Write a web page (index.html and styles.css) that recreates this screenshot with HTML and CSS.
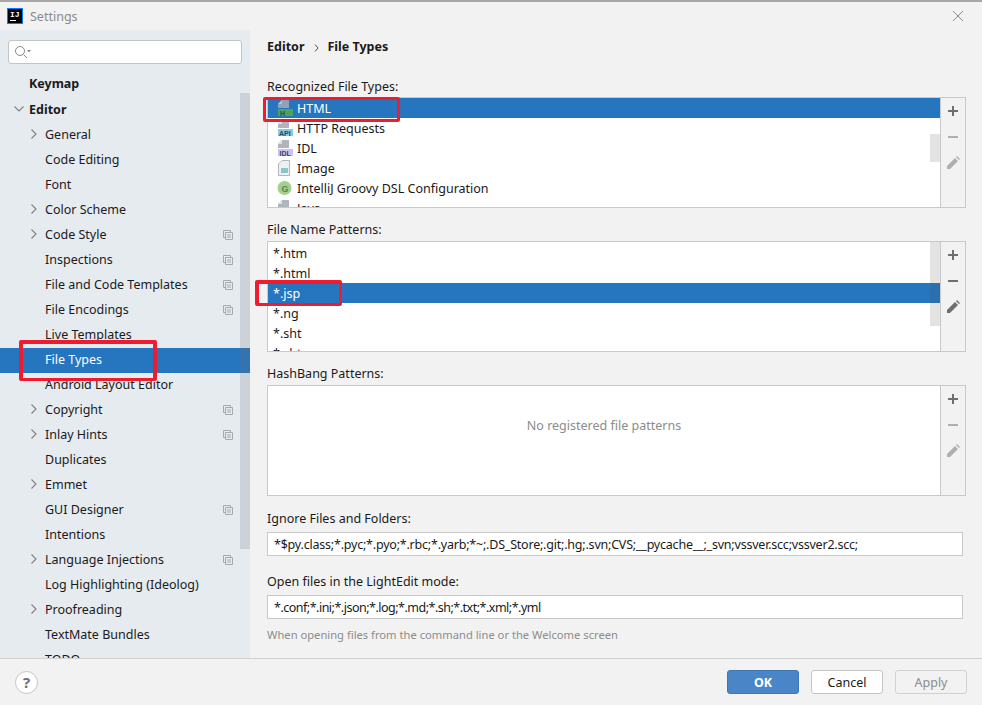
FILE: index.html
```html
<!DOCTYPE html>
<html lang="en">
<head>
<meta charset="utf-8">
<title>Settings</title>
<link rel="stylesheet" href="styles.css">
</head>
<body>
<div class="dialog">
  <header class="titlebar">
    <svg class="app-logo" width="16" height="16" viewBox="0 0 16 16"><rect x="0.5" y="0.5" width="15" height="15" fill="#000" stroke="#087cfa"/><text x="3" y="9" class="logo-text">IJ</text><rect x="3" y="12" width="6" height="1" fill="#fff"/></svg>
    <span class="title">Settings</span>
    <svg class="close" width="10" height="10" viewBox="0 0 10 10"><path d="M0 0l10 10M10 0L0 10" stroke="#8c8c8c" fill="none"/></svg>
  </header>
  <div class="body">
    <aside class="sidebar">
      <div class="search">
        <svg width="20" height="14" viewBox="0 0 20 14"><circle cx="6" cy="6" r="4.5" fill="none" stroke="#8a8a8a"/><path d="M9.5 9.5L13 13" stroke="#8a8a8a" fill="none"/><path d="M13 5h4l-2 2.5z" fill="#8a8a8a"/></svg>
      </div>
      <div class="tree">
        <div class="row bold l1 keymap">Keymap</div>
        <div class="row bold l1"><svg class="arrow" width="10" height="10" viewBox="0 0 10 10"><path d="M.5 2.5L5 7l4.5-4.5" /></svg>Editor</div>
        <div class="row l2"><svg class="arrow" width="10" height="10" viewBox="0 0 10 10"><path d="M2.5.5L7 5 2.5 9.5" /></svg>General</div>
        <div class="row l2">Code Editing</div>
        <div class="row l2">Font</div>
        <div class="row l2"><svg class="arrow" width="10" height="10" viewBox="0 0 10 10"><path d="M2.5.5L7 5 2.5 9.5" /></svg>Color Scheme</div>
        <div class="row l2"><svg class="arrow" width="10" height="10" viewBox="0 0 10 10"><path d="M2.5.5L7 5 2.5 9.5" /></svg>Code Style<svg class="copy" width="10" height="10" viewBox="0 0 10 10"><path d="M.5.5h7v2M.5.5v7h2M2.5 2.5h7v7h-7zM4 5h4M4 7h4"/></svg></div>
        <div class="row l2">Inspections<svg class="copy" width="10" height="10" viewBox="0 0 10 10"><path d="M.5.5h7v2M.5.5v7h2M2.5 2.5h7v7h-7zM4 5h4M4 7h4"/></svg></div>
        <div class="row l2">File and Code Templates<svg class="copy" width="10" height="10" viewBox="0 0 10 10"><path d="M.5.5h7v2M.5.5v7h2M2.5 2.5h7v7h-7zM4 5h4M4 7h4"/></svg></div>
        <div class="row l2">File Encodings<svg class="copy" width="10" height="10" viewBox="0 0 10 10"><path d="M.5.5h7v2M.5.5v7h2M2.5 2.5h7v7h-7zM4 5h4M4 7h4"/></svg></div>
        <div class="row l2">Live Templates</div>
        <div class="row l2 selected">File Types</div>
        <div class="row l2">Android Layout Editor</div>
        <div class="row l2"><svg class="arrow" width="10" height="10" viewBox="0 0 10 10"><path d="M2.5.5L7 5 2.5 9.5" /></svg>Copyright<svg class="copy" width="10" height="10" viewBox="0 0 10 10"><path d="M.5.5h7v2M.5.5v7h2M2.5 2.5h7v7h-7zM4 5h4M4 7h4"/></svg></div>
        <div class="row l2"><svg class="arrow" width="10" height="10" viewBox="0 0 10 10"><path d="M2.5.5L7 5 2.5 9.5" /></svg>Inlay Hints<svg class="copy" width="10" height="10" viewBox="0 0 10 10"><path d="M.5.5h7v2M.5.5v7h2M2.5 2.5h7v7h-7zM4 5h4M4 7h4"/></svg></div>
        <div class="row l2">Duplicates</div>
        <div class="row l2"><svg class="arrow" width="10" height="10" viewBox="0 0 10 10"><path d="M2.5.5L7 5 2.5 9.5" /></svg>Emmet</div>
        <div class="row l2">GUI Designer<svg class="copy" width="10" height="10" viewBox="0 0 10 10"><path d="M.5.5h7v2M.5.5v7h2M2.5 2.5h7v7h-7zM4 5h4M4 7h4"/></svg></div>
        <div class="row l2">Intentions</div>
        <div class="row l2"><svg class="arrow" width="10" height="10" viewBox="0 0 10 10"><path d="M2.5.5L7 5 2.5 9.5" /></svg>Language Injections<svg class="copy" width="10" height="10" viewBox="0 0 10 10"><path d="M.5.5h7v2M.5.5v7h2M2.5 2.5h7v7h-7zM4 5h4M4 7h4"/></svg></div>
        <div class="row l2">Log Highlighting (Ideolog)</div>
        <div class="row l2"><svg class="arrow" width="10" height="10" viewBox="0 0 10 10"><path d="M2.5.5L7 5 2.5 9.5" /></svg>Proofreading</div>
        <div class="row l2">TextMate Bundles</div>
        <div class="row l2">TODO</div>
        <div class="tree-thumb"></div>
      </div>
      <div class="mark mark-side"></div>
    </aside>
    <main class="content">
      <div class="crumb"><span>Editor</span><svg class="sep" width="5" height="8" viewBox="0 0 5 8"><path d="M1 .5L4 4 1 7.5"/></svg><span>File Types</span></div>
      <div class="label l-first">Recognized File Types:</div>
      <div class="panel">
        <div class="list">
          <div class="item selected"><svg class="ficon" width="16" height="16" viewBox="0 0 16 16"><path d="M5 0h7v8H1V4z" fill="#8fa2b6"/><path d="M5 0v4H1z" fill="#b9c4d0"/><rect x="1" y="9" width="15" height="7" fill="#4da35a"/><text x="3" y="15.5" class="tag">H</text></svg>HTML</div>
          <div class="item"><svg class="ficon" width="16" height="16" viewBox="0 0 16 16"><path d="M5 0h7v8H1V4z" fill="#afb5ba"/><path d="M5 0v4H1z" fill="#dfe2e4"/><rect x="1" y="9" width="15" height="7" fill="#86cbe6"/><text x="2" y="15.5" class="tag">API</text></svg>HTTP Requests</div>
          <div class="item"><svg class="ficon" width="16" height="16" viewBox="0 0 16 16"><path d="M5 0h7v8H1V4z" fill="#afb5ba"/><path d="M5 0v4H1z" fill="#dfe2e4"/><rect x="1" y="9" width="15" height="7" fill="#cfc0f2"/><text x="2.5" y="15.5" class="tag">IDL</text></svg>IDL</div>
          <div class="item"><svg class="ficon" width="16" height="16" viewBox="0 0 16 16"><path d="M5 .5h7.5v15h-11V4z" fill="#eef1f2" stroke="#afb5ba"/><rect x="4" y="8" width="7" height="5" fill="#8ac7c4"/></svg>Image</div>
          <div class="item"><svg class="ficon" width="16" height="16" viewBox="0 0 16 16"><circle cx="7.5" cy="8" r="7" fill="#a2d18f"/><text x="4.5" y="11.5" class="tag-g">G</text></svg>IntelliJ Groovy DSL Configuration</div>
          <div class="item"><svg class="ficon" width="16" height="16" viewBox="0 0 16 16"><path d="M5 0h7v8H1V4z" fill="#afb5ba"/><path d="M5 0v4H1z" fill="#dfe2e4"/></svg>Java</div>
          <div class="thumb thumb-a"></div>
        </div>
        <div class="tools">
          <svg width="14" height="14" viewBox="0 0 14 14"><path d="M7 2v10M2 7h10" stroke="#6e6e6e" stroke-width="2"/></svg>
          <svg class="off" width="14" height="14" viewBox="0 0 14 14"><path d="M2 7h10" stroke="#6e6e6e" stroke-width="2"/></svg>
          <svg class="off" width="14" height="14" viewBox="0 0 14 14"><path d="M1 13V10L9 2l3 3-8 8zM10 1l1-1 3 3-1 1z" fill="#6e6e6e"/></svg>
        </div>
        <div class="mark mark-html"></div>
      </div>
      <div class="label l-names">File Name Patterns:</div>
      <div class="panel">
        <div class="list list-names">
          <div class="item plain">*.htm</div>
          <div class="item plain">*.html</div>
          <div class="item plain selected">*.jsp</div>
          <div class="item plain">*.ng</div>
          <div class="item plain">*.sht</div>
          <div class="item plain">*.sht</div>
          <div class="thumb thumb-b"></div>
        </div>
        <div class="tools">
          <svg width="14" height="14" viewBox="0 0 14 14"><path d="M7 2v10M2 7h10" stroke="#6e6e6e" stroke-width="2"/></svg>
          <svg width="14" height="14" viewBox="0 0 14 14"><path d="M2 7h10" stroke="#6e6e6e" stroke-width="2"/></svg>
          <svg width="14" height="14" viewBox="0 0 14 14"><path d="M1 13V10L9 2l3 3-8 8zM10 1l1-1 3 3-1 1z" fill="#6e6e6e"/></svg>
        </div>
        <div class="mark mark-jsp"></div>
      </div>
      <div class="label l-hash">HashBang Patterns:</div>
      <div class="panel">
        <div class="list empty">No registered file patterns</div>
        <div class="tools">
          <svg width="14" height="14" viewBox="0 0 14 14"><path d="M7 2v10M2 7h10" stroke="#6e6e6e" stroke-width="2"/></svg>
          <svg class="off" width="14" height="14" viewBox="0 0 14 14"><path d="M2 7h10" stroke="#6e6e6e" stroke-width="2"/></svg>
          <svg class="off" width="14" height="14" viewBox="0 0 14 14"><path d="M1 13V10L9 2l3 3-8 8zM10 1l1-1 3 3-1 1z" fill="#6e6e6e"/></svg>
        </div>
      </div>
      <div class="label l-ignore">Ignore Files and Folders:</div>
      <div class="field field-ignore">*$py.class;*.pyc;*.pyo;*.rbc;*.yarb;*~;.DS_Store;.git;.hg;.svn;CVS;__pycache__;_svn;vssver.scc;vssver2.scc;</div>
      <div class="label l-light">Open files in the LightEdit mode:</div>
      <div class="field field-light">*.conf;*.ini;*.json;*.log;*.md;*.sh;*.txt;*.xml;*.yml</div>
      <div class="hint">When opening files from the command line or the Welcome screen</div>
    </main>
  </div>
  <footer class="footer">
    <div class="help">?</div>
    <div class="buttons">
      <div class="btn primary">OK</div>
      <div class="btn">Cancel</div>
      <div class="btn disabled">Apply</div>
    </div>
  </footer>
</div>
</body>
</html>
```
FILE: styles.css
```css
* { box-sizing: border-box; }
html, body { margin: 0; padding: 0; }
body { width: 982px; height: 705px; overflow: hidden; background: #f2f2f2; font: 12.5px/20px "Noto Sans", sans-serif; color: #1a1a1a; }
.dialog { width: 982px; height: 705px; display: flex; flex-direction: column; border-top: 2px solid #a8a8a8; }
.titlebar { height: 28px; display: flex; align-items: center; padding: 0 19px 0 7px; gap: 7px; flex: none; }
.title { color: #8a8a8a; flex: 1; padding-top: 1px; }
.logo-text { font: bold 8px "Liberation Mono", monospace; fill: #fff; }
.body { flex: 1; display: flex; min-height: 0; }
.sidebar { width: 250px; flex: none; background: #e6ebf0; padding-top: 10px; display: flex; flex-direction: column; position: relative; overflow: hidden; }
.search { height: 24px; margin: 0 8px; background: #fff; border: 1px solid #c4c4c4; border-radius: 3px; display: flex; align-items: center; padding-left: 5px; flex: none; }
.tree { position: relative; margin-top: 9px; flex: 1; min-height: 0; overflow: hidden; }
.row { height: 25px; line-height: 23px; position: relative; white-space: nowrap; }
.row.keymap { line-height: 21px; }
.row.bold { font-weight: 700; }
.l1 { padding-left: 29px; }
.l2 { padding-left: 45px; }
.row.selected { background: #2675bf; color: #fff; }
.arrow { position: absolute; top: 6px; left: 29px; fill: none; stroke: #7f7f7f; stroke-width: 1.1; }
.l1 .arrow { left: 14px; }
.copy { position: absolute; top: 7px; right: 17px; fill: none; stroke: #a4abb0; }
.tree-thumb { position: absolute; left: 240px; top: 20px; width: 10px; height: 456px; background: rgba(100,110,120,.2); }
.content { flex: 1; padding: 5px 16px 0 17px; min-width: 0; }
.crumb { font-weight: 700; height: 20px; line-height: 22px; margin-top: 2px; display: flex; align-items: center; gap: 8px; }
.crumb .sep { fill: none; stroke: #555; margin-left: 2px; margin-top: 1px; }
.label { height: 20px; line-height: 22px; margin-top: 11px; }
.l-first { margin-top: 19px; margin-bottom: 1px; }
.l-names { margin-bottom: 2px; }
.l-hash { margin-bottom: 2px; }
.l-ignore { margin-top: 12px; margin-bottom: 4px; }
.l-light { margin-top: 15px; margin-bottom: 4px; }
.panel { display: flex; height: 111px; border: 1px solid #c9c9c9; position: relative; }
.list { flex: 1; background: #fff; position: relative; overflow: hidden; border-right: 1px solid #c9c9c9; }
.list-names { padding-top: 1px; }
.item { height: 20px; line-height: 22px; padding-left: 29px; position: relative; white-space: nowrap; }
.item.plain { padding-left: 5px; }
.item.selected { background: #2675bf; color: #fff; }
.ficon { position: absolute; left: 9px; top: 2px; }
.tag { font: bold 7px "Liberation Sans", sans-serif; fill: #2c4a62; }
.tag-g { font: bold 9px "Liberation Sans", sans-serif; fill: #5f7f55; }
.thumb { position: absolute; right: 0; width: 10px; background: rgba(80,80,80,.16); }
.thumb-a { top: 36px; height: 28px; }
.thumb-b { top: 0; height: 84px; }
.tools { width: 24px; flex: none; display: flex; flex-direction: column; align-items: center; gap: 12px; padding-top: 6px; }
.tools .off { opacity: .5; }
.empty { display: flex; align-items: center; justify-content: center; color: #8c8c8c; padding-bottom: 30px; }
.field { height: 24px; line-height: 23px; background: #fff; border: 1px solid #c9c9c9; padding-left: 6px; margin-right: 3px; white-space: nowrap; overflow: hidden; }
.field-ignore { letter-spacing: -.21px; }
.field-light { letter-spacing: -.5px; }
.hint { font-size: 11.2px; color: #8c8c8c; margin-top: 6px; line-height: 20px; }
.footer { height: 47px; flex: none; border-top: 1px solid #d1d1d1; display: flex; justify-content: space-between; align-items: center; padding: 0 15px; }
.help { width: 23px; height: 23px; border-radius: 50%; border: 1px solid #c4c4c4; background: #fff; text-align: center; line-height: 21px; font-weight: 700; font-size: 15px; color: #6e6e6e; }
.buttons { display: flex; gap: 12px; }
.btn { width: 72px; height: 24px; line-height: 23px; text-align: center; border: 1px solid #c4c4c4; border-radius: 3px; background: #fff; }
.btn.primary { background: #4a86c7; border-color: #3f76b5; color: #fff; font-weight: 700; }
.btn.disabled { background: #f2f2f2; color: #8c8c8c; border-color: #d1d1d1; }
.mark { position: absolute; border: 3px solid #ee1c2e; border-radius: 2px; }
.mark-side { left: 19px; top: 310px; width: 138px; height: 41px; border-width: 4px 4px 3px; }
.mark-html { left: -5px; top: -1px; width: 137px; height: 25px; }
.mark-jsp { left: -13px; top: 38px; width: 87px; height: 26px; border-width: 4px 3px 3px 4px; }
```
